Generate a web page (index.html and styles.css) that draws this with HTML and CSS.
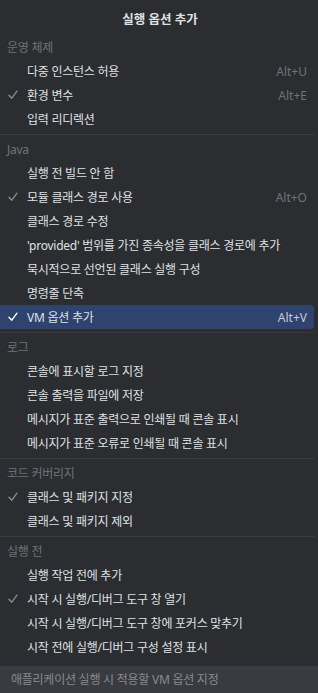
FILE: index.html
```html
<!DOCTYPE html>
<html lang="ko">
<head>
<meta charset="utf-8">
<title>실행 옵션 추가</title>
<link rel="stylesheet" href="styles.css">
</head>
<body>
<div class="popup">
  <div class="title">실행 옵션 추가</div>

  <div class="header">운영 체제</div>
  <div class="item"><span class="check"></span><span class="label">다중 인스턴스 허용</span><span class="key">Alt+U</span></div>
  <div class="item"><span class="check"><svg viewBox="0 0 10 10" width="10" height="10"><polyline points="1,5.2 3.8,8.2 9,1.2"/></svg></span><span class="label">환경 변수</span><span class="key">Alt+E</span></div>
  <div class="item"><span class="check"></span><span class="label">입력 리디렉션</span></div>
  <div class="sep"></div>

  <div class="header">Java</div>
  <div class="item"><span class="check"></span><span class="label">실행 전 빌드 안 함</span></div>
  <div class="item"><span class="check"><svg viewBox="0 0 10 10" width="10" height="10"><polyline points="1,5.2 3.8,8.2 9,1.2"/></svg></span><span class="label">모듈 클래스 경로 사용</span><span class="key">Alt+O</span></div>
  <div class="item"><span class="check"></span><span class="label">클래스 경로 수정</span></div>
  <div class="item"><span class="check"></span><span class="label">'provided' 범위를 가진 종속성을 클래스 경로에 추가</span></div>
  <div class="item"><span class="check"></span><span class="label">묵시적으로 선언된 클래스 실행 구성</span></div>
  <div class="item"><span class="check"></span><span class="label">명령줄 단축</span></div>
  <div class="item selected"><span class="check"><svg viewBox="0 0 10 10" width="10" height="10"><polyline points="1,5.2 3.8,8.2 9,1.2"/></svg></span><span class="label">VM 옵션 추가</span><span class="key">Alt+V</span></div>
  <div class="sep"></div>

  <div class="header">로그</div>
  <div class="item"><span class="check"></span><span class="label">콘솔에 표시할 로그 지정</span></div>
  <div class="item"><span class="check"></span><span class="label">콘솔 출력을 파일에 저장</span></div>
  <div class="item"><span class="check"></span><span class="label">메시지가 표준 출력으로 인쇄될 때 콘솔 표시</span></div>
  <div class="item"><span class="check"></span><span class="label">메시지가 표준 오류로 인쇄될 때 콘솔 표시</span></div>
  <div class="sep"></div>

  <div class="header">코드 커버리지</div>
  <div class="item"><span class="check"><svg viewBox="0 0 10 10" width="10" height="10"><polyline points="1,5.2 3.8,8.2 9,1.2"/></svg></span><span class="label">클래스 및 패키지 지정</span></div>
  <div class="item"><span class="check"></span><span class="label">클래스 및 패키지 제외</span></div>
  <div class="sep"></div>

  <div class="header">실행 전</div>
  <div class="item"><span class="check"></span><span class="label">실행 작업 전에 추가</span></div>
  <div class="item"><span class="check"><svg viewBox="0 0 10 10" width="10" height="10"><polyline points="1,5.2 3.8,8.2 9,1.2"/></svg></span><span class="label">시작 시 실행/디버그 도구 창 열기</span></div>
  <div class="item"><span class="check"></span><span class="label">시작 시 실행/디버그 도구 창에 포커스 맞추기</span></div>
  <div class="item"><span class="check"></span><span class="label">시작 전에 실행/디버그 구성 설정 표시</span></div>

  <div class="footer">애플리케이션 실행 시 적용할 VM 옵션 지정</div>
</div>
</body>
</html>
```
FILE: styles.css
```css
html, body {
  margin: 0;
  padding: 0;
  background: #2b2d30;
}

body {
  font-family: "Noto Sans", "Noto Sans CJK KR", sans-serif;
  font-size: 12px;
  color: #dfe1e5;
}

.popup {
  width: 318px;
  height: 693px;
  display: flex;
  flex-direction: column;
  overflow: hidden;
}

.title {
  height: 36px;
  box-sizing: border-box;
  padding-top: 10px;
  line-height: 19px;
  text-align: center;
  font-size: 12.5px;
  font-weight: 700;
  color: #dfe1e5;
  padding-left: 2px;
}

.header {
  height: 23px;
  line-height: 23px;
  padding-left: 7px;
  color: #6f737a;
  letter-spacing: -0.25px;
}

.item {
  height: 24px;
  display: flex;
  align-items: center;
  margin-right: 4px;
  padding-right: 7px;
  border-radius: 0 4px 4px 0;
  white-space: nowrap;
}

.item.selected {
  background: #2e436e;
}

.check {
  width: 27px;
  flex: none;
  display: flex;
  align-items: center;
}

.check svg {
  margin-left: 8px;
  fill: none;
  stroke: #868a91;
  stroke-width: 1.4;
  stroke-linecap: round;
  stroke-linejoin: round;
}

.selected .check svg {
  stroke: #ffffff;
}

.label {
  flex: 1;
  letter-spacing: -0.25px;
}

.key {
  color: #6f737a;
}

.selected .key {
  color: #c9ccd6;
}

.sep {
  height: 1px;
  background: #393b40;
  margin: 3px 3px 3px 0;
}

.footer {
  margin-top: auto;
  height: 27px;
  line-height: 27px;
  padding-left: 11px;
  background: #393b40;
  color: #868a91;
  letter-spacing: -0.25px;
}
```
